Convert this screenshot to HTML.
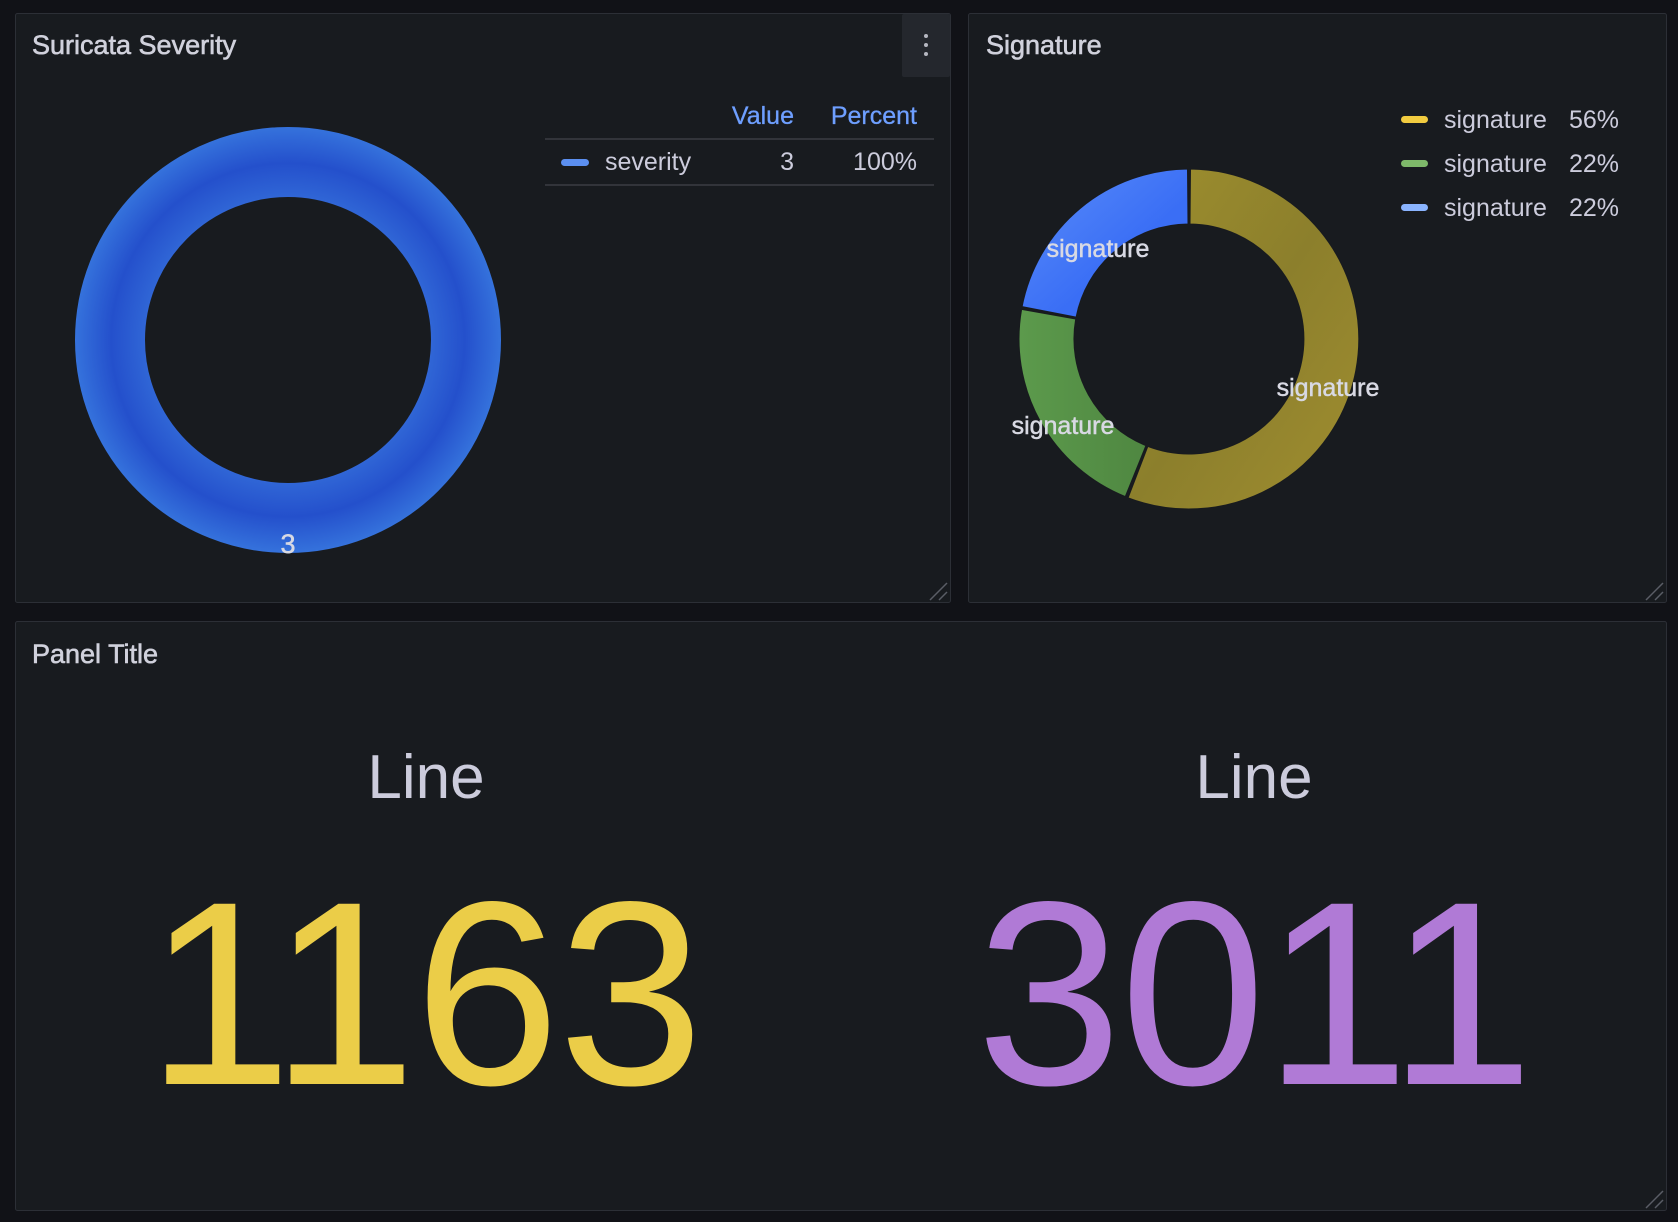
<!DOCTYPE html>
<html><head><meta charset="utf-8"><style>
html,body{margin:0;padding:0;background:#111217;width:1678px;height:1222px;overflow:hidden;font-family:"Liberation Sans",sans-serif;}
</style></head><body>
<svg width="1678" height="1222" viewBox="0 0 1678 1222" xmlns="http://www.w3.org/2000/svg" style="display:block">
<defs>
<radialGradient id="g1" cx="288" cy="340" r="213" gradientUnits="userSpaceOnUse">
<stop offset="0.67" stop-color="#3066d6"/><stop offset="0.83" stop-color="#2450cc"/><stop offset="1" stop-color="#3572dc"/>
</radialGradient>
<linearGradient id="gy" x1="0" y1="0" x2="1" y2="1"><stop offset="0" stop-color="#9e8f2e"/><stop offset="0.5" stop-color="#8c7f2c"/><stop offset="1" stop-color="#a08e30"/></linearGradient>
<linearGradient id="gg" x1="0" y1="0" x2="1" y2="0"><stop offset="0" stop-color="#5c9a4c"/><stop offset="1" stop-color="#4f8741"/></linearGradient>
<linearGradient id="gb" x1="0" y1="0" x2="1" y2="1"><stop offset="0" stop-color="#5a8dfa"/><stop offset="0.6" stop-color="#3a6ef5"/><stop offset="1" stop-color="#3a6ef5"/></linearGradient>
</defs>
<rect x="15.5" y="13.5" width="935" height="589" rx="2" fill="#181b1f" stroke="#2c2f36"/>
<rect x="968.5" y="13.5" width="698" height="589" rx="2" fill="#181b1f" stroke="#2c2f36"/>
<rect x="15.5" y="621.5" width="1651" height="589" rx="2" fill="#181b1f" stroke="#2c2f36"/>
<rect x="902" y="14" width="48" height="63" rx="2" fill="#24272d"/>
<circle cx="926" cy="36" r="2" fill="#b5b7c0"/><circle cx="926" cy="45" r="2" fill="#b5b7c0"/><circle cx="926" cy="54" r="2" fill="#b5b7c0"/>
<g stroke="#5a5d66" stroke-width="1.5">
<line x1="930" y1="600" x2="947" y2="583"/><line x1="939" y1="600" x2="947" y2="592"/>
<line x1="1646" y1="600" x2="1663" y2="583"/><line x1="1655" y1="600" x2="1663" y2="592"/>
<line x1="1646" y1="1208" x2="1663" y2="1191"/><line x1="1655" y1="1208" x2="1663" y2="1200"/>
</g>
<g fill="#d0d1dc" stroke="#d0d1dc" stroke-width="0.6" font-size="27">
<text x="32" y="54">Suricata Severity</text>
<text x="986" y="54">Signature</text>
<text x="32" y="663">Panel Title</text>
</g>
<circle cx="288" cy="340" r="178" fill="none" stroke="url(#g1)" stroke-width="70"/>
<text x="288" y="553" fill="#d8d9e3" stroke="#d8d9e3" stroke-width="0.5" font-size="27" text-anchor="middle">3</text>
<g font-size="25">
<text x="794" y="124" fill="#6e9fff" stroke="#6e9fff" stroke-width="0.3" text-anchor="end">Value</text>
<text x="917" y="124" fill="#6e9fff" stroke="#6e9fff" stroke-width="0.3" text-anchor="end">Percent</text>
<line x1="545" y1="139" x2="934" y2="139" stroke="#3a3d44" stroke-width="1.5"/>
<rect x="561" y="159" width="28" height="7" rx="3.5" fill="#5b8ff0"/>
<text x="605" y="170" fill="#ccccdc">severity</text>
<text x="794" y="170" fill="#ccccdc" text-anchor="end">3</text>
<text x="917" y="170" fill="#ccccdc" text-anchor="end">100%</text>
<line x1="545" y1="185" x2="934" y2="185" stroke="#3a3d44" stroke-width="1.5"/>
</g>
<path d="M1190.5,169 A170,170 0 1 1 1128.1,497.8 L1147.8,446.4 A115,115 0 1 0 1190,224 Z" fill="url(#gy)" stroke="#181b1f" stroke-width="1"/>
<path d="M1125.3,496.6 A170,170 0 0 1 1021.6,309.4 L1075.7,319 A115,115 0 0 0 1145.9,445.6 Z" fill="url(#gg)" stroke="#181b1f" stroke-width="1"/>
<path d="M1022.1,306.6 A170,170 0 0 1 1187.5,169 L1188,224 A115,115 0 0 0 1076.1,317.1 Z" fill="url(#gb)" stroke="#181b1f" stroke-width="1"/>
<g fill="#d8d9e3" stroke="#d8d9e3" stroke-width="0.5" font-size="25" text-anchor="middle">
<text x="1098" y="257">signature</text>
<text x="1328" y="396">signature</text>
<text x="1063" y="434">signature</text>
</g>
<g font-size="25" fill="#ccccdc">
<rect x="1401" y="116" width="27" height="7" rx="3.5" fill="#f2cc40"/>
<rect x="1401" y="160" width="27" height="7" rx="3.5" fill="#7eb96a"/>
<rect x="1401" y="204" width="27" height="7" rx="3.5" fill="#8ab4ff"/>
<text x="1444" y="128">signature</text><text x="1569" y="128">56%</text>
<text x="1444" y="172">signature</text><text x="1569" y="172">22%</text>
<text x="1444" y="216">signature</text><text x="1569" y="216">22%</text>
</g>
<g fill="#ccccdc" font-size="62" text-anchor="middle">
<text x="426" y="798">Line</text>
<text x="1254" y="798">Line</text>
</g>
<g font-size="262" text-anchor="middle">
<text x="424" y="1084" fill="#ebcd48" letter-spacing="-2">1163</text>
<text x="1254" y="1084" fill="#b07ad6" letter-spacing="-2">3011</text>
</g>
</svg>
</body></html>
